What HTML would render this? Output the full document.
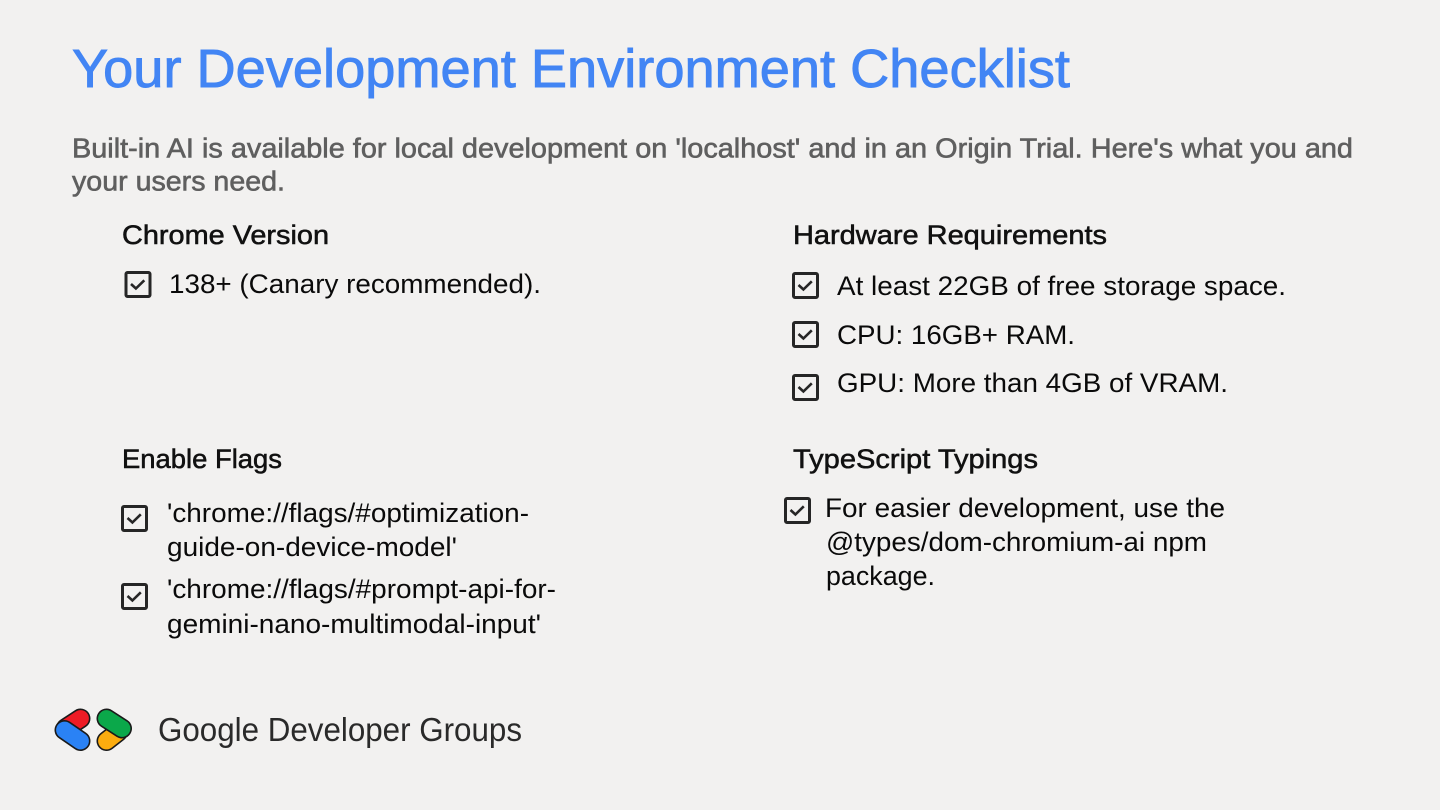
<!DOCTYPE html>
<html lang="en">
<head>
<meta charset="utf-8">
<title>Your Development Environment Checklist</title>
<style>
html,body{margin:0;padding:0;background:#f2f1f0;}
body{width:1440px;height:810px;overflow:hidden;}
svg{display:block;}
text{font-family:"Liberation Sans",sans-serif;}
.t{font-size:54px;fill:#4285f4;stroke:#4285f4;stroke-width:.9px;}
.s{font-size:28px;fill:#5f5f5f;stroke:#5f5f5f;stroke-width:.6px;}
.h{font-size:27px;fill:#111;stroke:#111;stroke-width:.55px;}
.b{font-size:27px;fill:#0a0a0a;}
.f{font-size:33px;fill:#2a2a2a;}
.box{fill:none;stroke:#262626;stroke-width:3;}
.chk{fill:none;stroke:#262626;stroke-width:2.6;}
</style>
</head>
<body>
<svg width="1440" height="810" viewBox="0 0 1440 810" xmlns="http://www.w3.org/2000/svg">
<defs>
<g id="cb">
<rect class="box" x="1.5" y="1.500" width="24" height="24" rx="1.500"/>
<path class="chk" d="M6.500 13 L11.400 17.500 L19.800 9.300"/>
</g>
</defs>
<rect width="1440" height="810" fill="#f2f1f0"/>

<text class="t" x="72" y="87" textLength="998" lengthAdjust="spacingAndGlyphs">Your Development Environment Checklist</text>
<text class="s" x="72" y="157.500" textLength="1281" lengthAdjust="spacingAndGlyphs">Built-in AI is available for local development on 'localhost' and in an Origin Trial. Here's what you and</text>
<text class="s" x="72" y="190.500" textLength="213" lengthAdjust="spacingAndGlyphs">your users need.</text>

<text class="h" x="122" y="244" textLength="207" lengthAdjust="spacingAndGlyphs">Chrome Version</text>
<use href="#cb" x="124.500" y="271"/>
<text class="b" x="169" y="293" textLength="372" lengthAdjust="spacingAndGlyphs">138+ (Canary recommended).</text>

<text class="h" x="793" y="244" textLength="314" lengthAdjust="spacingAndGlyphs">Hardware Requirements</text>
<use href="#cb" x="792" y="272"/>
<text class="b" x="837" y="295" textLength="449" lengthAdjust="spacingAndGlyphs">At least 22GB of free storage space.</text>
<use href="#cb" x="792" y="321"/>
<text class="b" x="837" y="344" textLength="238" lengthAdjust="spacingAndGlyphs">CPU: 16GB+ RAM.</text>
<use href="#cb" x="792" y="374"/>
<text class="b" x="837" y="392" textLength="391" lengthAdjust="spacingAndGlyphs">GPU: More than 4GB of VRAM.</text>

<text class="h" x="122" y="468" textLength="160" lengthAdjust="spacingAndGlyphs">Enable Flags</text>
<use href="#cb" x="121" y="505"/>
<text class="b" x="167" y="522" textLength="362" lengthAdjust="spacingAndGlyphs">'chrome://flags/#optimization-</text>
<text class="b" x="167" y="556" textLength="290" lengthAdjust="spacingAndGlyphs">guide-on-device-model'</text>
<use href="#cb" x="121" y="583"/>
<text class="b" x="167" y="598" textLength="389" lengthAdjust="spacingAndGlyphs">'chrome://flags/#prompt-api-for-</text>
<text class="b" x="167" y="633" textLength="374" lengthAdjust="spacingAndGlyphs">gemini-nano-multimodal-input'</text>

<text class="h" x="793" y="468" textLength="245" lengthAdjust="spacingAndGlyphs">TypeScript Typings</text>
<use href="#cb" x="784" y="497"/>
<text class="b" x="825" y="517" textLength="400" lengthAdjust="spacingAndGlyphs">For easier development, use the</text>
<text class="b" x="826" y="551" textLength="381" lengthAdjust="spacingAndGlyphs">@types/dom-chromium-ai npm</text>
<text class="b" x="826" y="585" textLength="109" lengthAdjust="spacingAndGlyphs">package.</text>

<g fill="none" stroke-linecap="round">
<path d="M66 728 L80.500 718.500" stroke="#1a1a1a" stroke-width="20"/>
<path d="M66 728 L80.500 718.500" stroke="#ee1c25" stroke-width="16.800"/>
<path d="M64.500 730 L80.500 741" stroke="#1a1a1a" stroke-width="20"/>
<path d="M64.500 730 L80.500 741" stroke="#2a82f5" stroke-width="16.800"/>
<path d="M106.500 741 L118 732" stroke="#1a1a1a" stroke-width="20"/>
<path d="M106.500 741 L118 732" stroke="#fbac0f" stroke-width="16.800"/>
<path d="M106.500 718.500 L122 728.500" stroke="#1a1a1a" stroke-width="20"/>
<path d="M106.500 718.500 L122 728.500" stroke="#0ba84a" stroke-width="16.800"/>
</g>
<text class="f" x="158" y="741" textLength="364" lengthAdjust="spacingAndGlyphs">Google Developer Groups</text>
</svg>
</body>
</html>
